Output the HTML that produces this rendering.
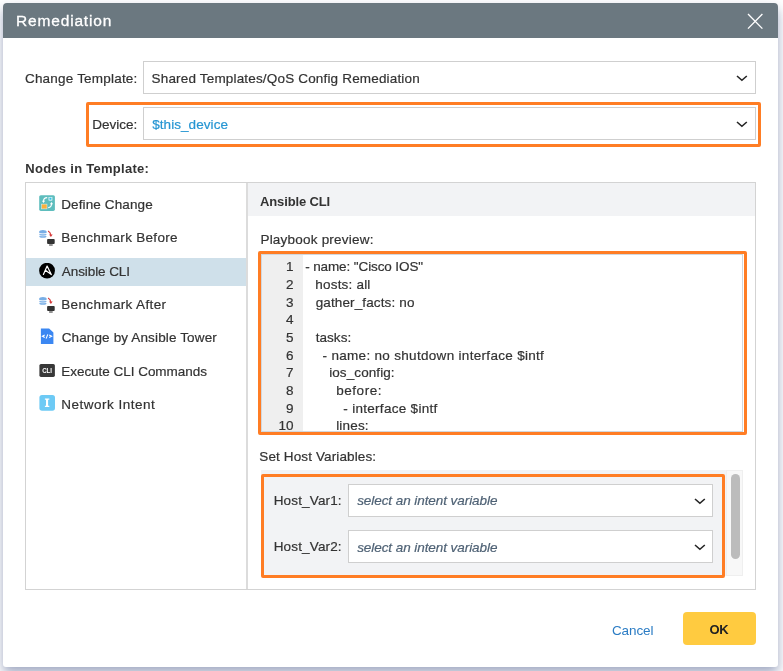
<!DOCTYPE html>
<html><head><meta charset="utf-8">
<style>
html,body{margin:0;padding:0;width:783px;height:671px;overflow:hidden;background:#fff;}
body{font-family:"Liberation Sans",sans-serif;color:#333;position:relative;}
.a{position:absolute;}
.t{position:absolute;white-space:pre;line-height:1;-webkit-text-stroke:0.2px currentColor;}
#dlg{left:3px;top:3px;width:775px;height:664px;background:#fff;border-radius:4px 4px 3px 3px;box-shadow:0 6px 12px 0 rgba(30,50,110,0.42);}
#hdr{left:3px;top:3px;width:775px;height:35px;background:#6b7880;border-radius:4px 4px 0 0;}
.sel{position:absolute;background:#fff;border:1px solid #cfcfcf;box-sizing:border-box;}
.chev{position:absolute;width:7px;height:7px;border-right:1.6px solid #333;border-bottom:1.6px solid #333;transform:rotate(45deg);}
.orange{position:absolute;border:3px solid #ff7d24;border-radius:2px;box-sizing:border-box;}
.code{font-size:13.5px;color:#333;}
</style></head><body><div id="root" style="position:absolute;left:0;top:0;width:783px;height:671px;will-change:transform;">
<div id="dlg" class="a"></div>
<div id="hdr" class="a"></div>
<svg class="a" style="left:746px;top:12px" width="19" height="19" viewBox="0 0 19 19"><path d="M2 2 L16.4 16.6 M16.4 2 L2 16.6" stroke="#fff" stroke-width="1.35" fill="none"/></svg>

<div class="sel" style="left:143px;top:61px;width:613px;height:33px;"></div>
<svg class="a" style="left:736px;top:74.8px" width="12" height="7" viewBox="0 0 12 7"><path d="M1 1 L5.9 5.3 L10.8 1" stroke="#262626" stroke-width="1.6" fill="none"/></svg>

<div class="orange" style="left:86px;top:101.5px;width:674.5px;height:45.5px;"></div>
<div class="sel" style="left:143px;top:107px;width:613px;height:33px;"></div>
<svg class="a" style="left:736px;top:121.1px" width="12" height="7" viewBox="0 0 12 7"><path d="M1 1 L5.9 5.3 L10.8 1" stroke="#262626" stroke-width="1.6" fill="none"/></svg>


<div class="a" style="left:25px;top:182px;width:731px;height:408px;border:1px solid #d3d3d3;box-sizing:border-box;"></div>
<div class="a" style="left:246px;top:183px;width:2px;height:406px;background:#dcdcdc;"></div>
<div class="a" style="left:248px;top:183px;width:507px;height:33px;background:#f2f3f5;"></div>
<div class="a" style="left:26px;top:258px;width:220px;height:28px;background:#cfe0ea;"></div>

<!-- list items -->

<!-- icons -->
<svg class="a" style="left:39px;top:195px" width="16" height="16" viewBox="0 0 16 16">
 <rect x="0.2" y="0.2" width="15.7" height="15.7" rx="1.6" fill="#5ebdbd"/>
 <rect x="2.6" y="9.1" width="5.4" height="4.8" fill="#fbb03b" stroke="#dff3f3" stroke-width="0.5"/>
 <rect x="9.8" y="2.2" width="3.3" height="3.3" fill="#bfeaf5" stroke="#e9f8fb" stroke-width="0.4"/><circle cx="11.45" cy="3.85" r="1" fill="#2cc3ea"/>
 <path d="M8.2 2.6 Q4.6 2.7 4.5 6.2" stroke="#fff" stroke-width="1.1" fill="none"/><path d="M2.9 5.8 L6.1 5.8 L4.5 7.9 Z" fill="#fff"/>
 <path d="M9.2 12.6 Q12.4 12.4 12.5 9" stroke="#fff" stroke-width="1.1" fill="none"/><path d="M10.9 9.3 L14.1 9.3 L12.5 7.1 Z" fill="#fff"/>
</svg>
<svg class="a" style="left:39px;top:228px" width="17" height="19" viewBox="0 0 17 19">
 <g fill="#78aee6"><ellipse cx="3.9" cy="3.5" rx="3.6" ry="1.6"/><rect x="0.3" y="3.5" width="7.2" height="1.6"/><ellipse cx="3.9" cy="6.5" rx="3.6" ry="1.1"/><ellipse cx="3.9" cy="8.5" rx="3.6" ry="1.3"/></g>
 <path d="M0.5 5.6 Q3.9 6.6 7.3 5.6 M0.5 7.5 Q3.9 8.5 7.3 7.5" stroke="#fff" stroke-width="0.6" fill="none" opacity="0.8"/>
 <path d="M9.1 2.9 Q11.6 4.3 11.8 7" stroke="#d63a3a" stroke-width="1.2" fill="none"/><path d="M10 6.6 L13.7 6.6 L11.9 8.9 Z" fill="#d63a3a"/>
 <rect x="8.1" y="11" width="7.6" height="4.9" rx="0.9" fill="#333"/><rect x="10.1" y="16.3" width="3.6" height="1.4" fill="#666"/>
</svg>
<svg class="a" style="left:39px;top:263px" width="16" height="16" viewBox="0 0 16 16">
 <circle cx="8.05" cy="7.7" r="7.9" fill="#000"/>
 <path d="M4.4 11.4 L8.1 3.1 L12.3 11.6 L6.4 7.2" stroke="#fff" stroke-width="1.2" fill="none" stroke-linejoin="round" stroke-linecap="round"/>
</svg>
<svg class="a" style="left:39px;top:294.7px" width="17" height="19" viewBox="0 0 17 19">
 <g fill="#78aee6"><ellipse cx="3.9" cy="3.5" rx="3.6" ry="1.6"/><rect x="0.3" y="3.5" width="7.2" height="1.6"/><ellipse cx="3.9" cy="6.5" rx="3.6" ry="1.1"/><ellipse cx="3.9" cy="8.5" rx="3.6" ry="1.3"/></g>
 <path d="M0.5 5.6 Q3.9 6.6 7.3 5.6 M0.5 7.5 Q3.9 8.5 7.3 7.5" stroke="#fff" stroke-width="0.6" fill="none" opacity="0.8"/>
 <path d="M9.1 2.9 Q11.6 4.3 11.8 7" stroke="#d63a3a" stroke-width="1.2" fill="none"/><path d="M10 6.6 L13.7 6.6 L11.9 8.9 Z" fill="#d63a3a"/>
 <rect x="8.1" y="11" width="7.6" height="4.9" rx="0.9" fill="#333"/><rect x="10.1" y="16.3" width="3.6" height="1.4" fill="#666"/>
</svg>
<svg class="a" style="left:39px;top:327px" width="16" height="18" viewBox="0 0 16 18">
 <path d="M1.9 1.5 L10.1 1.5 L14.4 5.6 L14.4 16.9 L1.9 16.9 Z" fill="#3b87f2"/>
 <path d="M5.7 8.1 L3.4 9.35 L5.7 10.6 M10.2 8.1 L12.6 9.35 L10.2 10.6 M8.8 7.4 L7.1 11.6" stroke="#fff" stroke-width="1.1" fill="none"/>
</svg>
<svg class="a" style="left:39px;top:362px" width="16" height="16" viewBox="0 0 16 16">
 <rect x="0.4" y="1.9" width="15.5" height="13" rx="1.6" fill="#383838"/>
 <text x="3.2" y="11.1" font-family="Liberation Sans" font-weight="bold" font-size="7.3" fill="#fff" textLength="9.9" lengthAdjust="spacingAndGlyphs">CLI</text>
</svg>
<svg class="a" style="left:39px;top:395px" width="16" height="16" viewBox="0 0 16 16">
 <rect x="0.4" y="0" width="15.6" height="15.7" rx="2.6" fill="#6dcaf5"/>
 <path d="M5.9 3.6 H10.3 V4.7 H9.1 V10.8 H10.3 V11.9 H5.9 V10.8 H7 V4.7 H5.9 Z" fill="#fff"/>
</svg>
<!-- right panel -->

<div class="a" style="left:261px;top:254px;width:482px;height:178px;border:1px solid #d2d7dd;box-sizing:border-box;background:#fff;overflow:hidden;">
 <div class="a" style="left:0;top:0;width:41px;height:178px;background:#efefef;"></div>
</div>
<div class="orange" style="left:257.5px;top:250.5px;width:489px;height:184.5px;"></div>
<div id="code">
<div class="t code" style="left:262.5px;width:31px;text-align:right;top:260.19px;font-size:13.5px;">1</div>
<div class="t code" style="left:262.5px;width:31px;text-align:right;top:277.88px;font-size:13.5px;">2</div>
<div class="t code" style="left:262.5px;width:31px;text-align:right;top:295.57px;font-size:13.5px;">3</div>
<div class="t code" style="left:262.5px;width:31px;text-align:right;top:313.26px;font-size:13.5px;">4</div>
<div class="t code" style="left:262.5px;width:31px;text-align:right;top:330.95px;font-size:13.5px;">5</div>
<div class="t code" style="left:262.5px;width:31px;text-align:right;top:348.64px;font-size:13.5px;">6</div>
<div class="t code" style="left:262.5px;width:31px;text-align:right;top:366.33px;font-size:13.5px;">7</div>
<div class="t code" style="left:262.5px;width:31px;text-align:right;top:384.02px;font-size:13.5px;">8</div>
<div class="t code" style="left:262.5px;width:31px;text-align:right;top:401.71px;font-size:13.5px;">9</div>
<div class="t code" style="left:262.5px;width:31px;text-align:right;top:419.40px;font-size:13.5px;">10</div>
</div>

<div class="a" style="left:261px;top:470px;width:482px;height:106px;background:#f2f3f5;"></div>
<div class="orange" style="left:260.5px;top:474px;width:464px;height:104px;"></div>
<div class="sel" style="left:348px;top:484px;width:365px;height:33px;"></div>
<svg class="a" style="left:693.5px;top:497.8px" width="12" height="7" viewBox="0 0 12 7"><path d="M1 1 L5.9 5.3 L10.8 1" stroke="#262626" stroke-width="1.6" fill="none"/></svg>
<div class="sel" style="left:348px;top:530px;width:365px;height:33px;"></div>
<svg class="a" style="left:693.5px;top:544.2px" width="12" height="7" viewBox="0 0 12 7"><path d="M1 1 L5.9 5.3 L10.8 1" stroke="#262626" stroke-width="1.6" fill="none"/></svg>
<div class="a" style="left:726px;top:470px;width:17px;height:106px;background:#f8f8f8;border:1px solid #efefef;box-sizing:border-box;"></div>
<div class="a" style="left:731px;top:474px;width:9px;height:85px;background:#bcbcbc;border-radius:4.5px;"></div>

<div class="a" style="left:683px;top:612px;width:73px;height:33px;background:#ffcb40;border-radius:4px;"></div>
<div class="t" style="left:16.07px;top:13.15px;font-size:15.5px;letter-spacing:0.823px;color:#fff;-webkit-text-stroke:0.3px #fff;">Remediation</div>
<div class="t" style="left:24.94px;top:71.89px;font-size:13.5px;letter-spacing:0.204px;color:#333;">Change Template:</div>
<div class="t" style="left:151.56px;top:71.89px;font-size:13.5px;letter-spacing:0.172px;color:#333;">Shared Templates/QoS Config Remediation</div>
<div class="t" style="left:92.21px;top:117.89px;font-size:13.5px;letter-spacing:-0.002px;color:#333;">Device:</div>
<div class="t" style="left:152.17px;top:117.89px;font-size:13.5px;letter-spacing:0.073px;color:#2796d3;">$this_device</div>
<div class="t" style="left:25.27px;top:161.70px;font-size:13px;letter-spacing:0.276px;color:#333;font-weight:bold;-webkit-text-stroke:0;">Nodes in Template:</div>
<div class="t" style="left:61.21px;top:198.09px;font-size:13.5px;letter-spacing:0.114px;color:#333;">Define Change</div>
<div class="t" style="left:61.21px;top:231.42px;font-size:13.5px;letter-spacing:0.302px;color:#333;">Benchmark Before</div>
<div class="t" style="left:61.80px;top:264.76px;font-size:13.5px;letter-spacing:-0.078px;color:#333;">Ansible CLI</div>
<div class="t" style="left:61.21px;top:298.09px;font-size:13.5px;letter-spacing:0.358px;color:#333;">Benchmark After</div>
<div class="t" style="left:61.64px;top:331.42px;font-size:13.5px;letter-spacing:0.139px;color:#333;">Change by Ansible Tower</div>
<div class="t" style="left:61.21px;top:364.76px;font-size:13.5px;letter-spacing:-0.028px;color:#333;">Execute CLI Commands</div>
<div class="t" style="left:61.21px;top:398.09px;font-size:13.5px;letter-spacing:0.5px;color:#333;">Network Intent</div>
<div class="t" style="left:260.05px;top:194.60px;font-size:13px;letter-spacing:-0.133px;color:#333;font-weight:bold;-webkit-text-stroke:0;">Ansible CLI</div>
<div class="t" style="left:260.41px;top:233.29px;font-size:13.5px;letter-spacing:0.216px;color:#333;">Playbook preview:</div>
<div class="t" style="left:259.26px;top:449.59px;font-size:13.5px;letter-spacing:0.123px;color:#333;">Set Host Variables:</div>
<div class="t" style="left:273.71px;top:493.59px;font-size:13.5px;letter-spacing:0.151px;color:#333;">Host_Var1:</div>
<div class="t" style="left:357.20px;top:494.40px;font-size:13.5px;letter-spacing:-0.066px;color:#4f6275;font-style:italic;">select an intent variable</div>
<div class="t" style="left:273.71px;top:540.09px;font-size:13.5px;letter-spacing:0.151px;color:#333;">Host_Var2:</div>
<div class="t" style="left:357.20px;top:540.90px;font-size:13.5px;letter-spacing:-0.066px;color:#4f6275;font-style:italic;">select an intent variable</div>
<div class="t" style="left:611.94px;top:624.49px;font-size:13.5px;letter-spacing:-0.087px;color:#2b7cc4;-webkit-text-stroke:0;">Cancel</div>
<div class="t" style="left:709.49px;top:623.30px;font-size:13px;letter-spacing:-0.357px;color:#222;font-weight:bold;-webkit-text-stroke:0;">OK</div>
<div class="t" style="left:305.14px;top:260.19px;font-size:13.5px;letter-spacing:-0.105px;color:#333;">- name: "Cisco IOS"</div>
<div class="t" style="left:315.30px;top:277.88px;font-size:13.5px;letter-spacing:0.199px;color:#333;">hosts: all</div>
<div class="t" style="left:315.67px;top:295.57px;font-size:13.5px;letter-spacing:0.128px;color:#333;">gather_facts: no</div>
<div class="t" style="left:315.65px;top:330.95px;font-size:13.5px;letter-spacing:0.07px;color:#333;">tasks:</div>
<div class="t" style="left:322.54px;top:348.64px;font-size:13.5px;letter-spacing:0.308px;color:#333;">- name: no shutdown interface $intf</div>
<div class="t" style="left:329.20px;top:366.33px;font-size:13.5px;letter-spacing:0.087px;color:#333;">ios_config:</div>
<div class="t" style="left:336.20px;top:384.02px;font-size:13.5px;letter-spacing:0.55px;color:#333;">before:</div>
<div class="t" style="left:343.34px;top:401.71px;font-size:13.5px;letter-spacing:0.29px;color:#333;">- interface $intf</div>
<div class="t" style="left:336.20px;top:419.40px;font-size:13.5px;letter-spacing:0.174px;color:#333;">lines:</div>
</div></body></html>
